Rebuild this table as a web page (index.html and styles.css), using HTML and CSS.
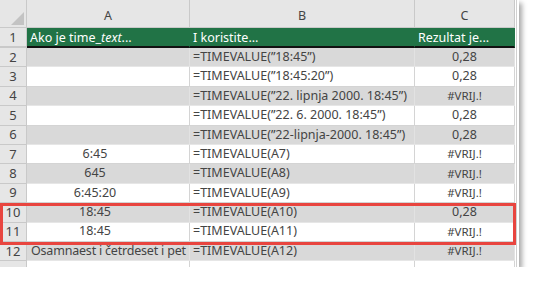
FILE: index.html
```html
<!DOCTYPE html>
<html>
<head>
<meta charset="utf-8">
<link rel="stylesheet" href="styles.css">
</head>
<body>
<div class="sheet">
  <div class="grid">
    <div class="corner"><span class="tri"></span></div>
    <div class="colhead">A</div>
    <div class="colhead">B</div>
    <div class="colhead">C</div>

    <div class="rowhead rh1">1</div>
    <div class="hcell">Ako je time_<i>text</i>...</div>
    <div class="hcell">I koristite...</div>
    <div class="hcell">Rezultat je...</div>

    <div class="rowhead">2</div><div class="cell a g"></div><div class="cell b g">=TIMEVALUE(”18:45”)</div><div class="cell c g">0,28</div>
    <div class="rowhead">3</div><div class="cell a"></div><div class="cell b">=TIMEVALUE(”18:45:20”)</div><div class="cell c">0,28</div>
    <div class="rowhead">4</div><div class="cell a g"></div><div class="cell b g">=TIMEVALUE(”22. lipnja 2000. 18:45”)</div><div class="cell c g err">#VRIJ.!</div>
    <div class="rowhead">5</div><div class="cell a"></div><div class="cell b">=TIMEVALUE(”22. 6. 2000. 18:45”)</div><div class="cell c">0,28</div>
    <div class="rowhead">6</div><div class="cell a g"></div><div class="cell b g">=TIMEVALUE(”22-lipnja-2000. 18:45”)</div><div class="cell c g">0,28</div>
    <div class="rowhead">7</div><div class="cell a">6:45</div><div class="cell b">=TIMEVALUE(A7)</div><div class="cell c err">#VRIJ.!</div>
    <div class="rowhead">8</div><div class="cell a g">645</div><div class="cell b g">=TIMEVALUE(A8)</div><div class="cell c g err">#VRIJ.!</div>
    <div class="rowhead">9</div><div class="cell a">6:45:20</div><div class="cell b">=TIMEVALUE(A9)</div><div class="cell c err">#VRIJ.!</div>
    <div class="rowhead">10</div><div class="cell a g">18:45</div><div class="cell b g">=TIMEVALUE(A10)</div><div class="cell c g">0,28</div>
    <div class="rowhead">11</div><div class="cell a">18:45</div><div class="cell b">=TIMEVALUE(A11)</div><div class="cell c err">#VRIJ.!</div>
    <div class="rowhead">12</div><div class="cell a g txt">Osamnaest i četrdeset i pet</div><div class="cell b g">=TIMEVALUE(A12)</div><div class="cell c g err">#VRIJ.!</div>
    <div class="rowhead"></div><div class="cell a"></div><div class="cell b"></div><div class="cell c"></div>
  </div>
  <div class="highlight"></div>
</div>
</body>
</html>
```

FILE: styles.css
```css
html, body {
  margin: 0;
  padding: 0;
  background: #ffffff;
}

.sheet {
  position: relative;
  width: 519px;
  height: 267px;
  overflow: hidden;
  background: #ffffff;
  box-shadow: 3px 3px 5px rgba(0, 0, 0, 0.35);
  font-family: "Noto Sans", "Open Sans", sans-serif;
  font-size: 12.5px;
  color: #444444;
}

.grid {
  display: grid;
  grid-template-columns: 27px 163px 225px 100px;
  grid-template-rows: 28px 20px repeat(12, 19.4px);
  border-right: 1px solid #d0d0d0;
  width: 516px;
}

.corner {
  position: relative;
  background: #e6e6e6;
  border-right: 1px solid #c9c9c9;
  border-bottom: 1px solid #c9c9c9;
}

.tri {
  position: absolute;
  right: 2px;
  bottom: 2px;
  width: 0;
  height: 0;
  border-left: 13px solid transparent;
  border-bottom: 13px solid #c3c3c3;
}

.colhead {
  background: #e6e6e6;
  border-right: 1px solid #c9c9c9;
  border-bottom: 1px solid #c9c9c9;
  display: flex;
  align-items: center;
  justify-content: center;
  padding-top: 3px;
  box-sizing: border-box;
}

.rowhead {
  background: #e6e6e6;
  border-right: 1px solid #c9c9c9;
  border-bottom: 1px solid #c9c9c9;
  display: flex;
  align-items: center;
  justify-content: center;
  box-sizing: border-box;
  line-height: 1;
  font-size: 13px;
}

.rh1 {
  border-bottom: 2px solid #c9c9c9;
}

.hcell {
  background: #217346;
  color: #ffffff;
  border-bottom: 2px solid #111111;
  border-right: 1px solid #217346;
  display: flex;
  align-items: center;
  padding-left: 3px;
  box-sizing: border-box;
  white-space: nowrap;
}

.cell {
  background: #ffffff;
  border-right: 1px solid #d4d4d4;
  border-bottom: 1px solid #d4d4d4;
  display: flex;
  align-items: center;
  box-sizing: border-box;
  white-space: nowrap;
  line-height: 1;
}

.cell.g {
  background: #d9d9d9;
  border-bottom-color: #e6e6e6;
  border-right-color: #e2e2e2;
}

.cell.a {
  justify-content: center;
  padding-right: 26px;
}

.cell.a.txt {
  justify-content: flex-start;
  padding-left: 4px;
  padding-right: 0;
  letter-spacing: -0.2px;
}

.cell.b {
  padding-left: 3px;
}

.cell.c {
  justify-content: center;
}

.cell.err {
  font-size: 11.5px;
}

.highlight {
  position: absolute;
  left: 0;
  top: 203px;
  width: 516px;
  height: 42px;
  border: 3px solid #e8453f;
  box-sizing: border-box;
}
```
